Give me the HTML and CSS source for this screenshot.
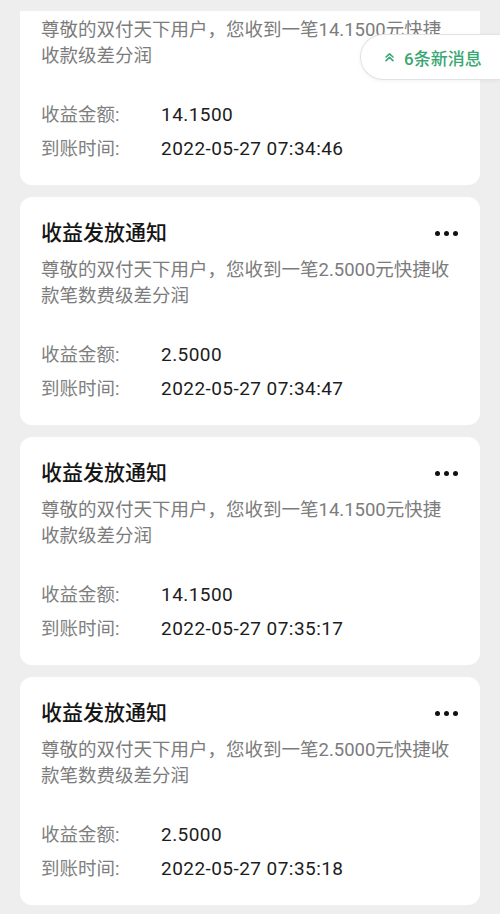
FILE: index.html
```html
<!DOCTYPE html>
<html lang="zh-CN">
<head>
  <meta charset="UTF-8">
  <meta name="viewport" content="width=device-width, initial-scale=1.0">
  <title>收益发放通知</title>
  <link rel="stylesheet" href="styles.css">
</head>
<body>
  <div class="viewport">
    <div class="feed">
      <div class="card">
        <div class="card-head">
          <h2>收益发放通知</h2>
          <span class="more"><i></i><i></i><i></i></span>
        </div>
        <p class="desc">尊敬的双付天下用户，您收到一笔14.1500元快捷收款级差分润</p>
        <div class="info">
          <span class="label">收益金额:</span><span class="value">14.1500</span>
          <span class="label">到账时间:</span><span class="value">2022-05-27 07:34:46</span>
        </div>
      </div>

      <div class="card">
        <div class="card-head">
          <h2>收益发放通知</h2>
          <span class="more"><i></i><i></i><i></i></span>
        </div>
        <p class="desc">尊敬的双付天下用户，您收到一笔2.5000元快捷收款笔数费级差分润</p>
        <div class="info">
          <span class="label">收益金额:</span><span class="value">2.5000</span>
          <span class="label">到账时间:</span><span class="value">2022-05-27 07:34:47</span>
        </div>
      </div>

      <div class="card">
        <div class="card-head">
          <h2>收益发放通知</h2>
          <span class="more"><i></i><i></i><i></i></span>
        </div>
        <p class="desc">尊敬的双付天下用户，您收到一笔14.1500元快捷收款级差分润</p>
        <div class="info">
          <span class="label">收益金额:</span><span class="value">14.1500</span>
          <span class="label">到账时间:</span><span class="value">2022-05-27 07:35:17</span>
        </div>
      </div>

      <div class="card">
        <div class="card-head">
          <h2>收益发放通知</h2>
          <span class="more"><i></i><i></i><i></i></span>
        </div>
        <p class="desc">尊敬的双付天下用户，您收到一笔2.5000元快捷收款笔数费级差分润</p>
        <div class="info">
          <span class="label">收益金额:</span><span class="value">2.5000</span>
          <span class="label">到账时间:</span><span class="value">2022-05-27 07:35:18</span>
        </div>
      </div>
    </div>
  </div>

  <!-- floating "new messages" pill -->
  <div class="new-msg">
    <svg width="11" height="10" viewBox="0 0 11 10" fill="none" stroke="currentColor" stroke-width="1.6" stroke-linecap="round" stroke-linejoin="round">
      <path d="M2 5L5.5 1.8L9 5"/>
      <path d="M2 8.6L5.5 5.4L9 8.6"/>
    </svg>
    <span>6条新消息</span>
  </div>
</body>
</html>
```

FILE: styles.css
```css
/* Notification list */
body {
  margin: 0;
  background-color: #eeeeee;
  font-family: Roboto, "Noto Sans CJK SC", sans-serif;
  overflow: hidden;
}

/* scrolled list area, first card is partly scrolled out */
.viewport {
  margin-top: 11px;
  height: 903px;
  overflow: hidden;
}

.feed {
  display: flex;
  flex-direction: column;
  gap: 12px;
  padding: 0 20px;
  margin-top: -54px;
}

.card {
  background-color: #fff;
  border-radius: 12px;
  padding: 21px 21px 19px;
}

.card-head {
  display: flex;
  justify-content: space-between;
  align-items: center;
  height: 30px;
}

.card-head h2 {
  margin: 0;
  font-size: 21px;
  font-weight: 500;
  line-height: 30px;
  color: #151515;
}

.more {
  display: flex;
  gap: 4px;
  margin-right: 1px;
}

.more i {
  width: 5px;
  height: 5px;
  border-radius: 50%;
  background-color: #111;
}

.desc {
  width: 412px;
  margin: 9px 0 0;
  font-size: 18.5px;
  line-height: 26px;
  color: #7c7c7c;
}

.info {
  display: grid;
  grid-template-columns: 120px 1fr;
  margin-top: 29px;
  font-size: 18.5px;
  line-height: 34px;
}

.label {
  color: #808080;
}

.value {
  color: #1c1c1c;
  font-size: 19px;
  letter-spacing: 0.45px;
}

.new-msg {
  position: absolute;
  top: 34px;
  right: 0;
  width: 140px;
  height: 46px;
  display: flex;
  align-items: center;
  gap: 9px;
  padding-left: 23px;
  box-sizing: border-box;
  background-color: #fff;
  border: 1px solid #e2e2e2;
  border-right: none;
  border-radius: 24px 0 0 24px;
  box-shadow: 0 1px 4px rgba(0, 0, 0, 0.05);
  color: #38a773;
  font-size: 17px;
  font-weight: 500;
}
```
